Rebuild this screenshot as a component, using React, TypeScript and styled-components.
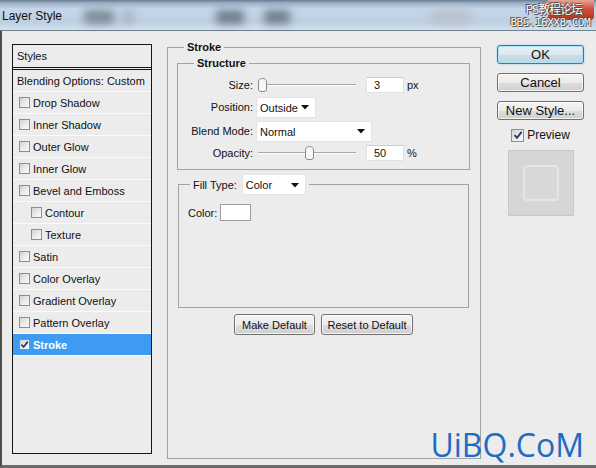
import styled, { createGlobalStyle } from "styled-components";

const GlobalStyle = createGlobalStyle`
  html, body { margin: 0; padding: 0; }
  body {
    width: 596px;
    height: 468px;
    overflow: hidden;
    font-family: "Liberation Sans", Arial, sans-serif;
    color: #111;
  }
`;

const Window = styled.div`
  position: relative;
  width: 596px;
  height: 468px;
  display: flex;
  flex-direction: column;
  overflow: hidden;
  background: #ececec;
  font-size: 11px;
`;

const TitleBar = styled.div`
  position: relative;
  flex: none;
  height: 30px;
  display: flex;
  align-items: center;
  padding-left: 2px;
  border-bottom: 1px solid #6f7f90;
  background: linear-gradient(
    180deg,
    #6a7b8d 0,
    #9ab1c8 3px,
    #c6d6e7 9px,
    #bcd0e3 22px,
    #d3dfeb 29px
  );
`;

const Title = styled.span`
  font-size: 12px;
  color: #111;
  padding-top: 2px;
  margin-right: 22px;
`;

const Blob = styled.span<{ $w: number; $gap: number; $tone: string }>`
  width: ${(p) => p.$w}px;
  height: 14px;
  margin-left: ${(p) => p.$gap}px;
  margin-top: 4px;
  background: ${(p) => p.$tone};
  filter: blur(4px);
  border-radius: 3px;
  flex: none;
`;

const CloseButton = styled.div`
  position: absolute;
  right: 2px;
  top: 0;
  width: 46px;
  height: 20px;
  border-radius: 0 0 4px 4px;
  background: linear-gradient(180deg, #e8a594 0, #c9523c 45%, #b5351f 100%);
  filter: blur(0.6px);
`;

const Stamp = styled.div`
  position: absolute;
  right: 6px;
  top: 1px;
  display: flex;
  flex-direction: column;
  align-items: flex-end;
  font-family: "DejaVu Sans Mono", "Noto Sans CJK SC", monospace;
  color: #fff;
  text-shadow: 0 0 1px #333, 1px 1px 0 #555, -1px -1px 0 #555;
`;

const StampTop = styled.span`
  font-size: 12px;
  line-height: 15px;
  height: 15px;
  letter-spacing: -1px;
  margin-right: 8px;
  font-family: "Noto Sans CJK SC", sans-serif;
`;

const StampBottom = styled.span`
  font-size: 11px;
  line-height: 13px;
  letter-spacing: -0.5px;
`;

const Body = styled.div`
  flex: 1;
  display: flex;
  align-items: flex-start;
  padding: 13px 0 0 10px;
  border-left: 2px solid #4e4e4e;
  border-bottom: 3px solid #6c6c6c;
`;

const StylesList = styled.div`
  flex: none;
  width: 140px;
  height: 410px;
  box-sizing: border-box;
  border: 1px solid #161616;
  margin-right: 15px;
`;

const ListHeader = styled.div`
  height: 22px;
  display: flex;
  align-items: center;
  padding-left: 4px;
  border-bottom: 3px double #161616;
`;

const ListRow = styled.div<{ $indent?: boolean; $selected?: boolean; $plain?: boolean }>`
  height: 21px;
  display: flex;
  align-items: center;
  gap: 3px;
  padding-left: ${(p) => (p.$plain ? 4 : p.$indent ? 18 : 6)}px;
  border-bottom: 1px solid #fbfbfb;
  background: ${(p) => (p.$selected ? "#3d9cf2" : "transparent")};
  color: ${(p) => (p.$selected ? "#fff" : "#111")};
  font-weight: ${(p) => (p.$selected ? "bold" : "normal")};
`;

const Box = styled.span<{ $size: number }>`
  flex: none;
  width: ${(p) => p.$size}px;
  height: ${(p) => p.$size}px;
  box-sizing: border-box;
  border: 1px solid #8d8e8f;
  background: linear-gradient(135deg, #d2d2d2 0%, #eeeeee 60%, #fafafa 100%);
  display: inline-flex;
  align-items: center;
  justify-content: center;
`;

const Group = styled.fieldset<{ $w: number; $h: number }>`
  margin: 0;
  min-width: 0;
  box-sizing: border-box;
  width: ${(p) => p.$w}px;
  height: ${(p) => p.$h}px;
  border: 1px solid #a2a2a2;
`;

const MainGroup = styled(Group)`
  flex: none;
  margin-top: -3px;
  margin-right: 16px;
  padding: 4px 10px 0 9px;
`;

const StructureGroup = styled(Group)`
  padding: 8px 0 0 0;
`;

const FillGroup = styled(Group)`
  margin: 4px 0 0 1px;
  padding: 9px 0 0 9px;
`;

const Legend = styled.legend<{ $offset: number }>`
  padding: 0 3px;
  margin-left: ${(p) => p.$offset}px;
  font-weight: bold;
  line-height: 12px;
`;

const FillLegend = styled.legend`
  padding: 0 3px;
  margin-left: 2px;
  display: flex;
  align-items: center;
  gap: 5px;
`;

const Form = styled.div`
  display: grid;
  grid-template-columns: 75px auto;
  grid-template-rows: 16px 20px 20px 16px;
  column-gap: 3px;
  row-gap: 4px;
`;

const Label = styled.span`
  text-align: right;
  align-self: center;
`;

const Controls = styled.div`
  display: flex;
  align-items: center;
`;

const Track = styled.div`
  position: relative;
  width: 98px;
  height: 14px;
  margin-left: 2px;
  margin-right: 10px;

  &::before {
    content: "";
    position: absolute;
    left: 0;
    right: 0;
    top: 6px;
    height: 1px;
    background: #a8a8a8;
    border-bottom: 1px solid #fdfdfd;
  }
`;

const Thumb = styled.svg`
  position: absolute;
  top: 0;
`;

const Field = styled.div`
  width: 38px;
  height: 16px;
  box-sizing: border-box;
  padding-left: 7px;
  display: flex;
  align-items: center;
  background: #fff;
  border: 1px solid #e2e2e2;
  border-top-color: #cdcdcd;
`;

const Unit = styled.span`
  margin-left: 3px;
`;

const Select = styled.div<{ $w: number }>`
  width: ${(p) => p.$w}px;
  height: 21px;
  box-sizing: border-box;
  display: flex;
  align-items: center;
  justify-content: space-between;
  padding: 1px 6px 0 3px;
  background: #fff;
  border: 1px solid #e4e4e4;
  font-weight: normal;
`;

const ColorRow = styled.div`
  display: flex;
  align-items: center;
  gap: 3px;
`;

const Swatch = styled.div`
  width: 31px;
  height: 17px;
  box-sizing: border-box;
  background: #fff;
  border: 1px solid #9c9c9c;
`;

const ButtonRow = styled.div`
  display: flex;
  justify-content: center;
  gap: 6px;
  margin-top: 6px;
`;

const Button = styled.button<{ $primary?: boolean; $w: number; $small?: boolean }>`
  width: ${(p) => p.$w}px;
  height: ${(p) => (p.$small ? 21 : 19)}px;
  padding: 0;
  border-radius: 3px;
  font-family: "Liberation Sans", Arial, sans-serif;
  font-size: ${(p) => (p.$small ? 11 : 13)}px;
  color: #111;
  border: 1px solid ${(p) => (p.$primary ? "#3a7aa8" : "#707070")};
  background: ${(p) =>
    p.$primary
      ? "linear-gradient(180deg, #e6f0f6 0, #dde8ef 50%, #cddce6 51%, #c3d5e1 100%)"
      : "linear-gradient(180deg, #f4f4f4 0, #ebebeb 50%, #dddddd 51%, #cfcfcf 100%)"};
  box-shadow: ${(p) =>
    p.$primary
      ? "inset 0 0 0 1px #aee0f5, 0 0 2px #7fc6ea"
      : "inset 0 0 0 1px rgba(255,255,255,0.75)"};
`;

const Side = styled.div`
  flex: none;
  width: 87px;
  margin-top: 1px;
  display: flex;
  flex-direction: column;
  align-items: center;
  gap: 9px;
`;

const PreviewToggle = styled.label`
  display: flex;
  align-items: center;
  gap: 3px;
  margin-top: -1px;
  font-size: 12px;
`;

const PreviewSwatch = styled.div`
  width: 66px;
  height: 66px;
  box-sizing: border-box;
  margin-top: -1px;
  display: flex;
  align-items: center;
  justify-content: center;
  background: #d6d6d6;
  border: 1px solid #c9c9c9;
`;

const PreviewShape = styled.div`
  width: 36px;
  height: 36px;
  box-sizing: border-box;
  border-radius: 4px;
  border: 2px solid #e5e5e5;
  background: #d8d8d8;
`;

const Watermark = styled.div`
  position: absolute;
  right: 12px;
  bottom: 3px;
  font-family: "Open Sans", sans-serif;
  font-size: 32px;
  line-height: 40px;
  color: #1f6bc4;
`;

function Check({ size, color }: { size: number; color: string }) {
  return (
    <svg width={size} height={size} viewBox="0 0 10 10">
      <path d="M1.5 5.2 L4 7.8 L8.6 1.8" fill="none" stroke={color} strokeWidth="1.9" />
    </svg>
  );
}

function Arrow() {
  return (
    <svg width="8" height="5" viewBox="0 0 8 5">
      <polygon points="0,0 8,0 4,4.5" fill="#111" />
    </svg>
  );
}

function Slider({ value }: { value: number }) {
  return (
    <Track>
      <Thumb width="9" height="14" viewBox="0 0 9 14" style={{ left: `${value * 0.84}px` }}>
        <path
          d="M4.5 0.5 C2 0.5 0.5 2 0.5 4 L0.5 11 C0.5 12.5 1.5 13.5 3 13.5 L6 13.5 C7.5 13.5 8.5 12.5 8.5 11 L8.5 4 C8.5 2 7 0.5 4.5 0.5 Z"
          fill="#f7f7f7"
          stroke="#8a8a8a"
        />
      </Thumb>
    </Track>
  );
}

const effects: { name: string; indent?: boolean; checked?: boolean }[] = [
  { name: "Drop Shadow" },
  { name: "Inner Shadow" },
  { name: "Outer Glow" },
  { name: "Inner Glow" },
  { name: "Bevel and Emboss" },
  { name: "Contour", indent: true },
  { name: "Texture", indent: true },
  { name: "Satin" },
  { name: "Color Overlay" },
  { name: "Gradient Overlay" },
  { name: "Pattern Overlay" },
  { name: "Stroke", checked: true },
];

export default function App() {
  return (
    <Window>
      <GlobalStyle />
      <TitleBar>
        <Title>Layer Style</Title>
        <Blob $w={30} $gap={0} $tone="#7d8c99" />
        <Blob $w={12} $gap={8} $tone="#a8b6c4" />
        <Blob $w={28} $gap={82} $tone="#6f7e8c" />
        <Blob $w={26} $gap={20} $tone="#6f7e8c" />
        <Blob $w={40} $gap={140} $tone="#b8c2cc" />
        <CloseButton />
        <Stamp>
          <StampTop>PS教程论坛</StampTop>
          <StampBottom>BBS.16XX8.COM</StampBottom>
        </Stamp>
      </TitleBar>

      <Body>
        <StylesList>
          <ListHeader>Styles</ListHeader>
          <ListRow $plain>Blending Options: Custom</ListRow>
          {effects.map((e) => (
            <ListRow key={e.name} $indent={e.indent} $selected={e.checked}>
              <Box $size={11}>{e.checked && <Check size={9} color="#2a3d66" />}</Box>
              {e.name}
            </ListRow>
          ))}
        </StylesList>

        <MainGroup $w={314} $h={418}>
          <Legend $offset={7}>Stroke</Legend>
          <StructureGroup $w={293} $h={113}>
            <Legend $offset={16}>Structure</Legend>
            <Form>
              <Label>Size:</Label>
              <Controls>
                <Slider value={0} />
                <Field>3</Field>
                <Unit>px</Unit>
              </Controls>
              <Label>Position:</Label>
              <Controls>
                <Select $w={60}>
                  Outside
                  <Arrow />
                </Select>
              </Controls>
              <Label>Blend Mode:</Label>
              <Controls>
                <Select $w={116}>
                  Normal
                  <Arrow />
                </Select>
              </Controls>
              <Label>Opacity:</Label>
              <Controls>
                <Slider value={56} />
                <Field>50</Field>
                <Unit>%</Unit>
              </Controls>
            </Form>
          </StructureGroup>

          <FillGroup $w={291} $h={134}>
            <FillLegend>
              Fill Type:
              <Select $w={64}>
                Color
                <Arrow />
              </Select>
            </FillLegend>
            <ColorRow>
              Color:
              <Swatch />
            </ColorRow>
          </FillGroup>

          <ButtonRow>
            <Button $small $w={81}>Make Default</Button>
            <Button $small $w={92}>Reset to Default</Button>
          </ButtonRow>
        </MainGroup>

        <Side>
          <Button $primary $w={87}>OK</Button>
          <Button $w={87}>Cancel</Button>
          <Button $w={87}>New Style...</Button>
          <PreviewToggle>
            <Box $size={13}>
              <Check size={10} color="#2a3d66" />
            </Box>
            Preview
          </PreviewToggle>
          <PreviewSwatch>
            <PreviewShape />
          </PreviewSwatch>
        </Side>
      </Body>

      <Watermark>UiBQ.CoM</Watermark>
    </Window>
  );
}
